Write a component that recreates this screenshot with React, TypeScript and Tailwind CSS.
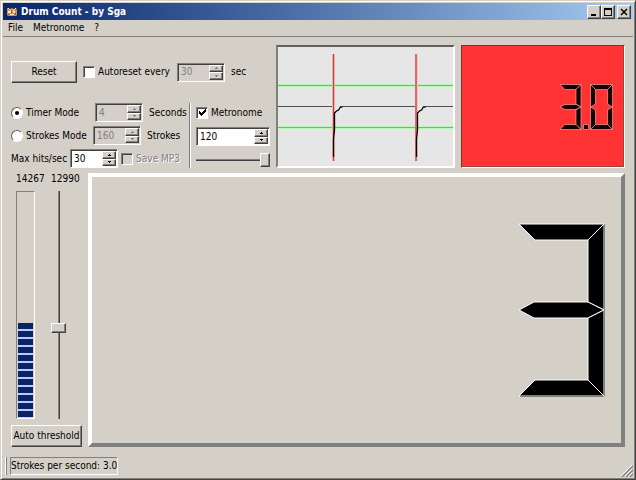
import { useState } from "react";
import { clsx } from "clsx";

const RAISED =
  "border border-t-white border-l-white border-r-[#404040] border-b-[#404040] bg-[#d4d0c8] shadow-[inset_-1px_-1px_0_#808080]";
const SUNKEN =
  "border border-t-[#808080] border-l-[#808080] border-r-white border-b-white shadow-[inset_1px_1px_0_#404040]";

interface SpinBoxProps {
  id: string;
  label?: string;
  initial: number;
  disabled?: boolean;
  className?: string;
}

function SpinBox({ id, label, initial, disabled, className }: SpinBoxProps) {
  const [value, setValue] = useState(initial);
  const arrow = disabled ? "#808080" : "#000";

  return (
    <div className={clsx("flex h-[19px] p-px", SUNKEN, disabled ? "bg-[#d4d0c8]" : "bg-white", className)}>
      <input
        id={id}
        aria-label={label}
        inputMode="numeric"
        value={value}
        disabled={disabled}
        onChange={(e) => setValue(Number(e.target.value) || 0)}
        className="w-0 min-w-0 flex-1 bg-transparent pl-[2px] outline-none disabled:text-[#808080]"
      />
      <div className="flex w-[14px] flex-col">
        <button
          type="button"
          aria-label="Increase"
          disabled={disabled}
          onClick={() => setValue(value + 1)}
          className={clsx("flex flex-1 items-center justify-center", RAISED)}
        >
          <svg width="3" height="2" viewBox="0 0 3 2" shapeRendering="crispEdges">
            <path d="M1 0h1v1h1v1H0V1h1z" fill={arrow} />
          </svg>
        </button>
        <button
          type="button"
          aria-label="Decrease"
          disabled={disabled}
          onClick={() => setValue(value - 1)}
          className={clsx("flex flex-1 items-center justify-center", RAISED)}
        >
          <svg width="3" height="2" viewBox="0 0 3 2" shapeRendering="crispEdges">
            <path d="M0 0h3v1H2v1H1V1H0z" fill={arrow} />
          </svg>
        </button>
      </div>
    </div>
  );
}

interface CheckProps {
  label: string;
  defaultChecked?: boolean;
  disabled?: boolean;
}

function Check({ label, defaultChecked, disabled }: CheckProps) {
  return (
    <label
      className={clsx(
        "flex items-center gap-[3px] whitespace-nowrap",
        disabled && "text-[#808080] [text-shadow:1px_1px_0_#fff]"
      )}
    >
      <span className="grid place-items-center">
        <input
          type="checkbox"
          defaultChecked={defaultChecked}
          disabled={disabled}
          className={clsx(
            "peer col-start-1 row-start-1 size-3 appearance-none",
            SUNKEN,
            disabled ? "bg-[#d4d0c8]" : "bg-white"
          )}
        />
        <svg
          width="7"
          height="7"
          viewBox="0 0 7 7"
          shapeRendering="crispEdges"
          className="pointer-events-none invisible col-start-1 row-start-1 peer-checked:visible"
        >
          <path d="M0 2h1v1h1v1h1V3h1V2h1V1h1V0h1v3H6v1H5v1H4v1H3v1H2V6H1V5H0z" />
        </svg>
      </span>
      {label}
    </label>
  );
}

function ModeRadio({ label, defaultChecked }: CheckProps) {
  return (
    <label className="flex items-center gap-[3px] whitespace-nowrap">
      <span className="grid place-items-center">
        <input
          type="radio"
          name="mode"
          defaultChecked={defaultChecked}
          className="peer col-start-1 row-start-1 size-3 appearance-none rounded-full border border-t-[#606060] border-r-white border-b-white border-l-[#606060] bg-white"
        />
        <span className="pointer-events-none invisible col-start-1 row-start-1 size-1 rounded-full bg-black peer-checked:visible" />
      </span>
      {label}
    </label>
  );
}

function TitleBar() {
  const button = clsx("flex h-[14px] items-center justify-center", RAISED);
  return (
    <header className="flex h-[17px] items-center bg-linear-to-r from-[#0a246a] to-[#a6caf0] pr-[2px] pl-1 text-white">
      <svg width="10" height="10" viewBox="0 0 10 10" className="mr-1">
        <path d="M0 1l3 1 2-1 2 1 2-1 1 2v5l-1 1H1L0 8z" fill="#e08a4a" />
        <path d="M1 1l3 3M9 1L6 4" stroke="#f8dcc0" />
        <path d="M1 4h3v2H1zM6 4h2v2H6zM3 7h4v1H3z" fill="#ffe8d4" />
        <path d="M4 4h1v2H4zM8 6h1v2H8zM1 7h1v1H1z" fill="#a04a20" />
      </svg>
      <h1 className="flex-1 text-[10px] font-bold">Drum Count - by Sga</h1>
      <button type="button" aria-label="Minimize" className={clsx(button, "w-[14px]")}>
        <svg width="8" height="8" viewBox="0 0 8 8" shapeRendering="crispEdges">
          <path d="M1 6h5v2H1z" />
        </svg>
      </button>
      <button type="button" aria-label="Maximize" className={clsx(button, "mr-[2px] w-[14px]")}>
        <svg width="8" height="8" viewBox="0 0 8 8" shapeRendering="crispEdges">
          <path d="M0 0h8v8H0zM1 2v5h6V2z" fillRule="evenodd" />
        </svg>
      </button>
      <button type="button" aria-label="Close" className={clsx(button, "w-[14px]")}>
        <svg width="8" height="8" viewBox="0 0 8 8">
          <path d="M1 1l6 6M7 1L1 7" stroke="#000" strokeWidth="1.5" />
        </svg>
      </button>
    </header>
  );
}

function Controls() {
  return (
    <section className="flex w-[259px] shrink-0 flex-col justify-between pt-4">
      <div className="flex items-center">
        <button type="button" className={clsx("mr-[6px] h-[22px] w-[66px]", RAISED)}>
          Reset
        </button>
        <Check label="Autoreset every" />
        <SpinBox id="autoreset" label="Autoreset seconds" initial={30} disabled className="mr-[6px] ml-auto w-12" />
        <label htmlFor="autoreset" className="w-[39px]">sec</label>
      </div>

      <div className="flex">
        <div className="flex flex-1 flex-col gap-1">
          <div className="flex items-center gap-[6px]">
            <div className="w-[78px]">
              <ModeRadio label="Timer Mode" defaultChecked />
            </div>
            <SpinBox id="seconds" initial={4} disabled className="w-12" />
            <label htmlFor="seconds">Seconds</label>
          </div>
          <div className="flex items-center gap-[6px]">
            <div className="w-[76px]">
              <ModeRadio label="Strokes Mode" />
            </div>
            <SpinBox id="strokes" initial={160} disabled className="w-12" />
            <label htmlFor="strokes">Strokes</label>
          </div>
          <div className="flex items-center gap-[3px]">
            <label htmlFor="max-hits" className="whitespace-nowrap">
              Max hits/sec
            </label>
            <SpinBox id="max-hits" initial={30} className="w-12" />
            <Check label="Save MP3" disabled />
          </div>
        </div>

        <div className="flex w-[81px] flex-col justify-between border-l border-[#808080] pl-[6px] shadow-[inset_1px_0_0_#fff]">
          <div className="flex h-[19px] items-center">
            <Check label="Metronome" defaultChecked />
          </div>
          <SpinBox id="bpm" label="Beats per minute" initial={120} />
          <input
            type="range"
            aria-label="Metronome volume"
            defaultValue={100}
            className="h-[17px] w-full appearance-none bg-[linear-gradient(#808080_50%,#404040_50%)] bg-[length:100%_2px] bg-center bg-no-repeat [&::-webkit-slider-thumb]:h-[14px] [&::-webkit-slider-thumb]:w-[10px] [&::-webkit-slider-thumb]:appearance-none [&::-webkit-slider-thumb]:border [&::-webkit-slider-thumb]:border-t-white [&::-webkit-slider-thumb]:border-r-[#404040] [&::-webkit-slider-thumb]:border-b-[#404040] [&::-webkit-slider-thumb]:border-l-white [&::-webkit-slider-thumb]:bg-[#d4d0c8] [&::-webkit-slider-thumb]:shadow-[inset_-1px_-1px_0_#808080]"
          />
        </div>
      </div>
    </section>
  );
}

function WaveForm() {
  return (
    <div className="min-w-0 flex-[175] border-2 border-t-[#606060] border-r-white border-b-white border-l-[#808080] bg-[#e6e6e6]">
      <svg viewBox="0 0 175 119" preserveAspectRatio="none" className="size-full" fill="none">
        <path d="M0 38.5h175M0 80.5h175" stroke="#b8f5b8" strokeWidth="3" />
        <path d="M0 38.5h175M0 80.5h175" stroke="#4fd34f" />
        <path d="M0 59.5h55M64 59.5h74M147 59.5h28" stroke="#505050" />
        <path d="M55.5 7v107M138.5 7v107" stroke="#f6c4c4" strokeWidth="3" />
        <path d="M55.5 7v107M138 7v107" stroke="#c83c3c" strokeWidth="1.3" />
        <path d="M55.5 110V92l1-9V66l2-2 2-1 2-3h2" stroke="#000" strokeWidth="1.3" />
        <path d="M138.5 110V92l1-9V66l2-2 2-1 2-3h2" stroke="#000" strokeWidth="1.3" />
      </svg>
    </div>
  );
}

function RateDisplay() {
  return (
    <div
      role="img"
      aria-label="3.0"
      className="flex min-w-0 flex-[151] items-center justify-end border border-t-[#803030] border-r-white border-b-white border-l-[#803030] bg-[#ff3333] pr-[11px] shadow-[inset_-1px_-1px_0_#a04040]"
    >
      <svg width="53" height="46" viewBox="0 0 53 46" fill="#180000" stroke="#ffb4b4" strokeWidth=".6">
        <path d="M0 .5h21l-5 5H5z" />
        <path d="M21 .5V23l-5-3V5.5z" />
        <path d="M0 23l5-2.5h11l5 2.5-5 2.5H5z" />
        <path d="M21 23v22.5l-5-5V26z" />
        <path d="M0 45.5l5-5h11l5 5z" />
        <path d="M23.5 40.5h5v5h-5z" />
        <path d="M30.5 .5h22l-5 5h-12z" />
        <path d="M52.5 .5V23l-5-3V5.5z" />
        <path d="M52.5 23v22.5l-5-5V26z" />
        <path d="M30.5 45.5l5-5h12l5 5z" />
        <path d="M30.5 .5V23l5-3V5.5z" />
        <path d="M30.5 23v22.5l5-5V26z" />
      </svg>
    </div>
  );
}

function CountDisplay() {
  return (
    <div
      role="img"
      aria-label="3"
      className="flex min-w-0 flex-1 items-center justify-end border-4 border-t-white border-r-[#808080] border-b-[#808080] border-l-white pr-4"
    >
      <svg width="86" height="174" viewBox="0 0 86 174" stroke="#fff" strokeWidth="1">
        <path d="M0 1h85L69 17H16z" />
        <path d="M85 1v86l-16-8V17z" />
        <path d="M0 87l15-8h54l16 8-16 8H15z" />
        <path d="M85 87v86l-16-16V95z" />
        <path d="M0 173l16-16h53l16 16z" />
        <path d="M85.5 1v172M1 173.5h84" stroke="#808080" />
      </svg>
    </div>
  );
}

const LEVEL_BARS = 12;

function Threshold() {
  const [threshold, setThreshold] = useState(12990);

  return (
    <section className="flex w-[71px] shrink-0 flex-col">
      <div className="flex flex-1 gap-2 pl-[5px]">
        <div className="flex w-[27px] flex-col">
          <span className="h-[18px]">14267</span>
          <div className="flex w-[19px] flex-1 flex-col justify-end border border-t-[#808080] border-r-white border-b-white border-l-[#808080] px-px">
            <div className="flex flex-col gap-[2px] bg-[#bccdf2] pb-px">
              {Array.from({ length: LEVEL_BARS }, (_, i) => (
                <div key={i} className="h-[6px] bg-[#0a246a]" />
              ))}
            </div>
          </div>
        </div>
        <div className="flex flex-col">
          <label htmlFor="threshold" className="h-[18px]">{threshold}</label>
          <input
            id="threshold"
            type="range"
            min={0}
            max={32767}
            value={threshold}
            onChange={(e) => setThreshold(Number(e.target.value))}
            className="h-0 w-[15px] flex-auto appearance-none bg-[linear-gradient(90deg,#808080_50%,#404040_50%)] bg-[length:2px_100%] bg-center bg-no-repeat [direction:rtl] [writing-mode:vertical-lr] [&::-webkit-slider-thumb]:h-[10px] [&::-webkit-slider-thumb]:w-[15px] [&::-webkit-slider-thumb]:appearance-none [&::-webkit-slider-thumb]:border [&::-webkit-slider-thumb]:border-t-white [&::-webkit-slider-thumb]:border-r-[#404040] [&::-webkit-slider-thumb]:border-b-[#404040] [&::-webkit-slider-thumb]:border-l-white [&::-webkit-slider-thumb]:bg-[#d4d0c8] [&::-webkit-slider-thumb]:shadow-[inset_-1px_-1px_0_#808080]"
          />
        </div>
      </div>
      <button type="button" className={clsx("mt-[6px] h-[22px] whitespace-nowrap", RAISED)}>
        Auto threshold
      </button>
    </section>
  );
}

export default function App() {
  return (
    <div className="flex min-h-screen flex-col border border-t-[#d4d0c8] border-r-[#404040] border-b-[#404040] border-l-[#d4d0c8] bg-[#d4d0c8] p-[2px] font-['DejaVu_Sans_Condensed','DejaVu_Sans',sans-serif] text-[10px] leading-3 text-black shadow-[inset_1px_1px_0_#fff,inset_-1px_-1px_0_#808080]">
      <TitleBar />
      <nav className="flex h-[17px] items-center gap-[10px] border-b border-[#808080] px-[5px]">
        <button type="button">File</button>
        <button type="button">Metronome</button>
        <button type="button">?</button>
      </nav>

      <main className="flex flex-1 flex-col gap-[5px] px-2 pt-2">
        <div className="flex h-[123px] gap-[6px]">
          <Controls />
          <WaveForm />
          <RateDisplay />
        </div>
        <div className="flex flex-1 gap-[6px]">
          <Threshold />
          <CountDisplay />
        </div>
      </main>

      <footer className="mt-2 flex h-[22px] items-center gap-[3px] pl-[2px]">
        <div className="h-[18px] w-[2px] border-r border-l border-r-[#808080] border-l-white" />
        <div className="flex h-[18px] items-center border border-t-[#808080] border-r-white border-b-white border-l-[#808080]">
          Strokes per second: 3.0
        </div>
        <svg width="12" height="12" viewBox="0 0 12 12" className="ml-auto self-end">
          <path d="M0 11L11 0M4 11l7-7M8 11l3-3" stroke="#fff" />
          <path d="M1 12L12 1M5 12l7-7M9 12l3-3" stroke="#808080" strokeWidth="1.4" />
        </svg>
      </footer>
    </div>
  );
}
